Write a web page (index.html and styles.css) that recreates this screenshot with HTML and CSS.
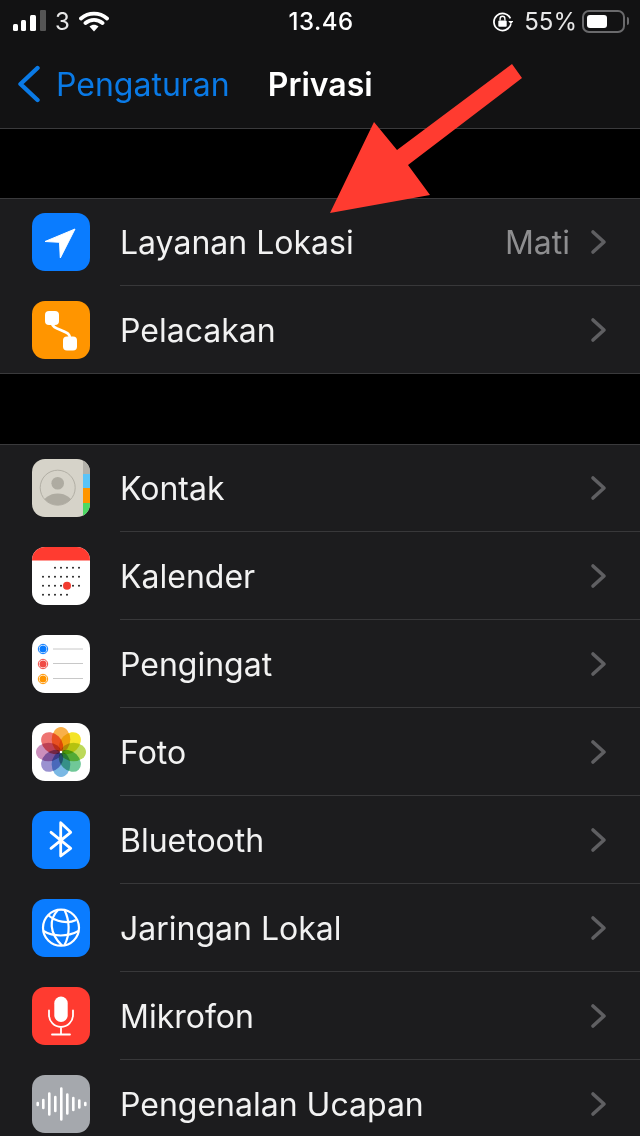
FILE: index.html
```html
<!DOCTYPE html>
<html lang="en">
<head>
    <meta charset="UTF-8">
    <meta name="viewport" content="width=device-width, initial-scale=1.0">
    <title>Privasi</title>
    <link rel="stylesheet" href="styles.css">
</head>
<body>
    <svg class="defs" width="0" height="0">
        <symbol id="chev" viewBox="0 0 18 26">
            <path d="M3 3l11 10L3 23" fill="none" stroke="#5f5f62" stroke-width="3.6" stroke-linecap="round" stroke-linejoin="round"/>
        </symbol>
    </svg>

    <header class="top">
        <div class="status">
            <div class="status-left">
                <svg class="signal" width="34" height="22" viewBox="0 0 34 22">
                    <rect x="0" y="14" width="5" height="7" rx="1.5" fill="#fff"/>
                    <rect x="8" y="10" width="5" height="11" rx="1.5" fill="#fff"/>
                    <rect x="17" y="5" width="6" height="16" rx="1.5" fill="#fff"/>
                    <rect x="27" y="0" width="6" height="21" rx="1" fill="#555"/>
                </svg>
                <span class="carrier">3</span>
                <svg class="wifi" width="30" height="22" viewBox="0 0 30 22">
                    <path d="M2 8.500c7.500-6.500 18.500-6.500 26 0M6.500 13c5-4.300 12-4.300 17 0" fill="none" stroke="#fff" stroke-width="3.800" stroke-linecap="round"/>
                    <path d="M10.500 16.500c2.700-2.300 6.300-2.300 9 0L15 21.500z" fill="#fff"/>
                </svg>
            </div>
            <div class="time">13.46</div>
            <div class="status-right">
                <svg class="lock" width="21" height="21" viewBox="0 0 20 20">
                    <path d="M17.500 7A8.200 8.200 0 1 0 18 12.500" fill="none" stroke="#fff" stroke-width="1.700"/>
                    <path d="M15.500 9.500h5l-2.500 3z" fill="#fff"/>
                    <rect x="6" y="9" width="8" height="6" rx="1" fill="#fff"/>
                    <path d="M7.700 9V7.300a2.300 2.300 0 0 1 4.600 0V9" fill="none" stroke="#fff" stroke-width="1.300"/>
                </svg>
                <span class="percent">55%</span>
                <div class="battery"><div class="battery-fill"></div></div>
                <div class="battery-nub"></div>
            </div>
        </div>
        <nav class="navbar">
            <a class="back" href="#">
                <svg width="24" height="38" viewBox="0 0 24 38">
                    <path d="M20.500 3L3.500 19l17 16" fill="none" stroke="#0a7ae6" stroke-width="4.400" stroke-linecap="round" stroke-linejoin="round"/>
                </svg>
                <span>Pengaturan</span>
            </a>
            <h1>Privasi</h1>
        </nav>
    </header>

    <section class="group">
        <div class="row">
            <svg class="icon" viewBox="0 0 58 58">
                <rect width="58" height="58" rx="13" fill="#0a7cff"/>
                <path d="M43 16L13 28.500l14.500.8.800 15.700z" fill="#fff" stroke="#fff" stroke-width="1" stroke-linejoin="round"/>
            </svg>
            <div class="row-body">
                <span class="label">Layanan Lokasi</span>
                <span class="value">Mati</span>
                <svg class="chevron"><use href="#chev"/></svg>
            </div>
        </div>
        <div class="row">
            <svg class="icon" viewBox="0 0 58 58">
                <rect width="58" height="58" rx="13" fill="#ff9500"/>
                <path d="M19.700 22c1 4 4 5 10 7.500s8.300 3.500 8.300 8" fill="none" stroke="#fff" stroke-width="2.800"/>
                <rect x="13" y="10" width="14" height="14" rx="4" fill="#fff"/>
                <rect x="31" y="35.500" width="14" height="14" rx="4" fill="#fff"/>
            </svg>
            <div class="row-body">
                <span class="label">Pelacakan</span>
                <svg class="chevron"><use href="#chev"/></svg>
            </div>
        </div>
    </section>

    <section class="group">
        <div class="row">
            <svg class="icon" viewBox="0 0 58 58">
                <clipPath id="clip-contact"><rect width="58" height="58" rx="13"/></clipPath>
                <clipPath id="clip-face"><circle cx="25.700" cy="28.700" r="17.500"/></clipPath>
                <g clip-path="url(#clip-contact)">
                    <rect width="58" height="58" fill="#d6d3c9"/>
                    <rect x="51" width="7" height="15" fill="#b3b1aa"/>
                    <rect x="51" y="15" width="7" height="14" fill="#5ac4f8"/>
                    <rect x="51" y="29" width="7" height="15" fill="#ff9500"/>
                    <rect x="51" y="44" width="7" height="14" fill="#4cd964"/>
                </g>
                <circle cx="25.700" cy="28.700" r="17.500" fill="none" stroke="#b2afa5" stroke-width="1"/>
                <circle cx="25.700" cy="24.300" r="6.300" fill="#aeaba1"/>
                <ellipse cx="25.700" cy="46" rx="15" ry="11.500" fill="#aeaba1" clip-path="url(#clip-face)"/>
            </svg>
            <div class="row-body">
                <span class="label">Kontak</span>
                <svg class="chevron"><use href="#chev"/></svg>
            </div>
        </div>
        <div class="row">
            <svg class="icon" viewBox="0 0 58 58">
                <rect width="58" height="58" rx="13" fill="#fff"/>
                <path d="M0 13.500V13A13 13 0 0 1 13 0h32a13 13 0 0 1 13 13v.5z" fill="#ff3b30"/>
                <g stroke="#222" stroke-width="2" stroke-linecap="round" stroke-dasharray="0 6">
                    <path d="M23 20.700h25"/>
                    <path d="M11 29.700h37"/>
                    <path d="M11 38.700h37"/>
                    <path d="M11 47.700h25"/>
                </g>
                <circle cx="35" cy="38.700" r="4" fill="#f23b30"/>
            </svg>
            <div class="row-body">
                <span class="label">Kalender</span>
                <svg class="chevron"><use href="#chev"/></svg>
            </div>
        </div>
        <div class="row">
            <svg class="icon" viewBox="0 0 58 58">
                <rect width="58" height="58" rx="13" fill="#fff"/>
                <g fill="none" stroke-width="1">
                    <circle cx="11" cy="14" r="4.700" stroke="#0a7cff"/>
                    <circle cx="11" cy="29" r="4.700" stroke="#f04b45"/>
                    <circle cx="11" cy="44" r="4.700" stroke="#ff9500"/>
                </g>
                <circle cx="11" cy="14" r="3.500" fill="#0a7cff"/>
                <circle cx="11" cy="29" r="3.500" fill="#f04b45"/>
                <circle cx="11" cy="44" r="3.500" fill="#ff9500"/>
                <path d="M21 14h30M21 28.500h30M21 43.500h30" stroke="#c8c8c8" stroke-width="1"/>
            </svg>
            <div class="row-body">
                <span class="label">Pengingat</span>
                <svg class="chevron"><use href="#chev"/></svg>
            </div>
        </div>
        <div class="row">
            <svg class="icon" viewBox="0 0 58 58">
                <rect width="58" height="58" rx="13" fill="#fff"/>
                <g class="petals">
                    <ellipse cx="29" cy="16.500" rx="9.300" ry="12.500" fill="#f9b04a"/>
                    <ellipse cx="29" cy="16.500" rx="9.300" ry="12.500" fill="#f4e428" transform="rotate(45 29 29)"/>
                    <ellipse cx="29" cy="16.500" rx="9.300" ry="12.500" fill="#bcd95a" transform="rotate(90 29 29)"/>
                    <ellipse cx="29" cy="16.500" rx="9.300" ry="12.500" fill="#70c898" transform="rotate(135 29 29)"/>
                    <ellipse cx="29" cy="16.500" rx="9.300" ry="12.500" fill="#7ab8e4" transform="rotate(180 29 29)"/>
                    <ellipse cx="29" cy="16.500" rx="9.300" ry="12.500" fill="#9a92d0" transform="rotate(225 29 29)"/>
                    <ellipse cx="29" cy="16.500" rx="9.300" ry="12.500" fill="#cb8fbc" transform="rotate(270 29 29)"/>
                    <ellipse cx="29" cy="16.500" rx="9.300" ry="12.500" fill="#ee7472" transform="rotate(315 29 29)"/>
                </g>
                <circle cx="29" cy="29" r="1.300" fill="#fff"/>
            </svg>
            <div class="row-body">
                <span class="label">Foto</span>
                <svg class="chevron"><use href="#chev"/></svg>
            </div>
        </div>
        <div class="row">
            <svg class="icon" viewBox="0 0 58 58">
                <rect width="58" height="58" rx="13" fill="#0a7cff"/>
                <path d="M19 21.300l19.700 16L28.700 45V11.700l10 9.600L19 37.300" fill="none" stroke="#fff" stroke-width="2.800" stroke-linecap="round" stroke-linejoin="round"/>
            </svg>
            <div class="row-body">
                <span class="label">Bluetooth</span>
                <svg class="chevron"><use href="#chev"/></svg>
            </div>
        </div>
        <div class="row">
            <svg class="icon" viewBox="0 0 58 58">
                <rect width="58" height="58" rx="13" fill="#0a7cff"/>
                <g fill="none" stroke="#fff" stroke-width="2.200">
                    <circle cx="29" cy="28.700" r="18"/>
                    <path d="M26 11c-9 9-9 23 4 35.500M32.500 11c5 10 6 24 0 35"/>
                    <path d="M16 16c8 7 20 9 28 5M11.500 32c10 6 24 6 35 0"/>
                </g>
            </svg>
            <div class="row-body">
                <span class="label">Jaringan Lokal</span>
                <svg class="chevron"><use href="#chev"/></svg>
            </div>
        </div>
        <div class="row">
            <svg class="icon" viewBox="0 0 58 58">
                <rect width="58" height="58" rx="13" fill="#ff3b30"/>
                <rect x="22.300" y="9.500" width="13.400" height="25.500" rx="6.700" fill="#fff"/>
                <path d="M17 23.500v4.500a12 12 0 0 0 24 0v-4.500M29 40v7M20 47.500h18" fill="none" stroke="#fff" stroke-width="1.800" stroke-linecap="round"/>
            </svg>
            <div class="row-body">
                <span class="label">Mikrofon</span>
                <svg class="chevron"><use href="#chev"/></svg>
            </div>
        </div>
        <div class="row">
            <svg class="icon" viewBox="0 0 58 58">
                <rect width="58" height="58" rx="13" fill="#a5a8ad"/>
                <path d="M5.700 28v2M11.300 25v8M17.300 18.500v21M23.300 22v14M29.300 13.500v31M35.300 19.500v19M41.300 23v12M47.300 25.500v7M53.300 28v2" stroke="#fff" stroke-width="2.600" stroke-linecap="round"/>
            </svg>
            <div class="row-body">
                <span class="label">Pengenalan Ucapan</span>
                <svg class="chevron"><use href="#chev"/></svg>
            </div>
        </div>
    </section>

    <svg class="red-arrow" width="640" height="220" viewBox="0 0 640 220">
        <path d="M330 213L374 122L397 150L512 64L522 78L408 165L430 195z" fill="#ff3b30"/>
    </svg>
</body>
</html>
```

FILE: styles.css
```css
* {
    box-sizing: border-box;
}

html,
body {
    margin: 0;
    padding: 0;
}

body {
    position: relative;
    width: 640px;
    height: 1136px;
    overflow: hidden;
    background-color: #000;
    color: #fff;
    font-family: Inter, "Noto Sans", sans-serif;
}

.defs {
    display: block;
    height: 0;
}

.top {
    height: 129px;
    background-color: #121213;
    border-bottom: 1px solid #3a3a3c;
}

.status {
    display: flex;
    align-items: center;
    height: 42px;
    padding: 0 11px 0 13px;
    font-size: 24px;
}

.status-left,
.status-right {
    display: flex;
    align-items: center;
    flex: 1;
}

.status-right {
    justify-content: flex-end;
}

.signal {
    margin-right: 8px;
}

.carrier {
    margin-right: 9px;
    color: #e8e8e8;
}

.time {
    font-weight: 500;
    letter-spacing: 0.5px;
}

.percent {
    margin: 0 5px 0 11px;
    color: #e8e8e8;
}

.battery {
    width: 43px;
    height: 23px;
    padding: 3px;
    border: 2px solid #6a6a6c;
    border-radius: 7px;
}

.battery-fill {
    width: 20px;
    height: 100%;
    background-color: #fff;
    border-radius: 3px;
}

.battery-nub {
    width: 2px;
    height: 8px;
    margin-left: 2px;
    background-color: #6a6a6c;
    border-radius: 0 2px 2px 0;
}

.navbar {
    display: flex;
    align-items: center;
    height: 86px;
    padding: 0 0 2px 17px;
}

.back {
    display: flex;
    align-items: center;
    gap: 15px;
    margin-right: 38px;
    color: #0a7ae6;
    font-size: 32px;
    text-decoration: none;
}

.navbar h1 {
    margin: 0;
    font-size: 32px;
    font-weight: 600;
}

.group {
    margin-top: 69px;
    background-color: #1c1c1e;
    border-top: 1px solid #3a3a3c;
    border-bottom: 1px solid #3a3a3c;
}

.group:last-of-type {
    margin-top: 70px;
}

.row {
    display: flex;
    align-items: center;
    height: 88px;
    padding-left: 32px;
}

.row:first-child {
    height: 87px;
}

.row:first-child .icon {
    margin-bottom: 1px;
}

.row:last-child {
    height: 87px;
}

.row:last-child .icon {
    margin-top: 1px;
}

.icon {
    flex: none;
    width: 58px;
    height: 58px;
}

.petals ellipse {
    mix-blend-mode: multiply;
}

.row-body {
    display: flex;
    align-items: center;
    align-self: stretch;
    flex: 1;
    margin-left: 30px;
    padding: 1px 32px 0 0;
    border-bottom: 1px solid #38383a;
}

.row:first-child .row-body {
    padding-top: 0;
}

.row:last-child .row-body {
    border-bottom: none;
}

.label {
    flex: 1;
    font-size: 32px;
    color: #f2f2f2;
}

.value {
    margin-right: 20px;
    font-size: 32px;
    color: #8e8e90;
}

.chevron {
    width: 18px;
    height: 26px;
}

.red-arrow {
    position: absolute;
    top: 0;
    left: 0;
}
```
